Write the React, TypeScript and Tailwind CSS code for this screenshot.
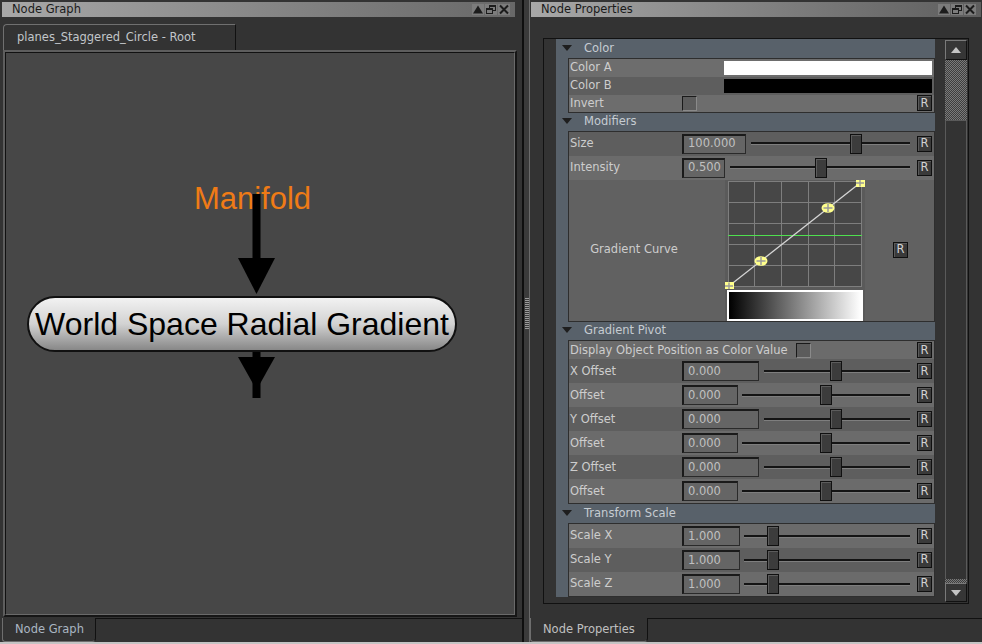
import React from "react";

type SliderRowData = {
  label: string;
  value: string;
  box: string;
  gap: string;
  handle: number;
  dark: boolean;
};

const modifierRows: SliderRowData[] = [
  { label: "Size", value: "100.000", box: "w-[64px]", gap: "ml-[5px]", handle: 99, dark: true },
  { label: "Intensity", value: "0.500", box: "w-[43px]", gap: "ml-[5px]", handle: 85, dark: false },
];

const pivotRows: SliderRowData[] = [
  { label: "X Offset", value: "0.000", box: "w-[77px]", gap: "ml-[5px]", handle: 66, dark: true },
  { label: "Offset", value: "0.000", box: "w-[56px]", gap: "ml-[4px]", handle: 78, dark: false },
  { label: "Y Offset", value: "0.000", box: "w-[77px]", gap: "ml-[5px]", handle: 66, dark: true },
  { label: "Offset", value: "0.000", box: "w-[56px]", gap: "ml-[4px]", handle: 78, dark: false },
  { label: "Z Offset", value: "0.000", box: "w-[77px]", gap: "ml-[5px]", handle: 66, dark: true },
  { label: "Offset", value: "0.000", box: "w-[56px]", gap: "ml-[4px]", handle: 78, dark: false },
];

const scaleRows: SliderRowData[] = [
  { label: "Scale X", value: "1.000", box: "w-[58px]", gap: "ml-[4px]", handle: 23, dark: false },
  { label: "Scale Y", value: "1.000", box: "w-[58px]", gap: "ml-[4px]", handle: 23, dark: true },
  { label: "Scale Z", value: "1.000", box: "w-[58px]", gap: "ml-[4px]", handle: 23, dark: false },
];

function WinIcons() {
  return (
    <div className="flex items-center gap-[1px]">
      <svg width="12" height="11" viewBox="0 0 12 11">
        <rect width="12" height="11" fill="#7c7c7c" />
        <path d="M6 1.5 L11 9.5 L1 9.5 Z" fill="#1c1c1c" />
      </svg>
      <svg width="12" height="11" viewBox="0 0 12 11">
        <rect width="12" height="11" fill="#7c7c7c" />
        <rect x="4.5" y="1.5" width="6" height="5" fill="none" stroke="#1c1c1c" strokeWidth="1" />
        <rect x="4.5" y="1" width="6" height="2" fill="#1c1c1c" />
        <rect x="1.5" y="4.5" width="6" height="5" fill="#7c7c7c" stroke="#1c1c1c" strokeWidth="1" />
        <rect x="1.5" y="4" width="6" height="2" fill="#1c1c1c" />
      </svg>
      <svg width="12" height="11" viewBox="0 0 12 11">
        <rect width="12" height="11" fill="#7c7c7c" />
        <path d="M2 1.5 L10 9.5 M10 1.5 L2 9.5" stroke="#1c1c1c" strokeWidth="2" />
      </svg>
    </div>
  );
}

function TitleBar({ title, className }: { title: string; className: string }) {
  return (
    <div className={`h-[15px] flex items-center justify-between pl-[10px] pr-[5px] ${className}`}>
      <span className="leading-none text-[#1a1a1a]">{title}</span>
      <WinIcons />
    </div>
  );
}

function RButton() {
  return (
    <div className="w-[15px] h-[16px] bg-[#3a3a3a] border border-[#0f0f0f] shadow-[inset_1px_1px_0_#5a5a5a] text-[#d2d2d2] text-[11.5px] leading-none flex items-center justify-center">
      R
    </div>
  );
}

function CheckBox() {
  return (
    <div className="w-[15px] h-[15px] bg-[#5c5c5c] border border-[#1a1a1a] border-b-[#8a8a8a] border-r-[#8a8a8a]" />
  );
}

function SectionHeader({ title, h }: { title: string; h: string }) {
  return (
    <div className={`${h} flex items-center pl-[6px] text-[#c6ccd2]`}>
      <svg width="10" height="7" viewBox="0 0 10 7">
        <path d="M0 0 L10 0 L5 6 Z" fill="#1e1e1e" />
      </svg>
      <span className="ml-[12px] leading-none">{title}</span>
    </div>
  );
}

function SliderRow({ row }: { row: SliderRowData }) {
  return (
    <div className={`h-[24px] flex items-center ${row.dark ? "bg-[#5e5e5e]" : "bg-[#6b6b6b]"}`}>
      <div className="w-[113px] pl-[1px] text-[#cdcdcd] leading-none">{row.label}</div>
      <div
        className={`${row.box} h-[20px] bg-[#656565] border-t-2 border-l-2 border-[#1a1a1a] border-b border-r border-b-[#2a2a2a] border-r-[#2a2a2a] pl-[4px] flex items-center text-[#c0c0c0] leading-none`}
      >
        {row.value}
      </div>
      <div className={`relative flex-1 h-[20px] flex items-center ${row.gap}`}>
        <div className="w-full h-[3px] border-t-2 border-[#141414] border-b border-b-[#7e7e7e]" />
        <div
          className="absolute top-0 w-[12px] h-[20px] bg-[#3c3c3c] border border-[#101010] shadow-[inset_1px_1px_0_#5c5c5c]"
          style={{ left: row.handle }}
        />
      </div>
      <div className="ml-[7px] mr-[2px]">
        <RButton />
      </div>
    </div>
  );
}

function CurveEditor() {
  const vx = [3.5, 29.5, 56.5, 83.5, 109.5, 136.5];
  const hy = [1.5, 22.5, 43.5, 64.5, 85.5, 106.5];
  const pts = [
    [36, 81],
    [103, 28],
  ];
  return (
    <svg width="140" height="141" viewBox="0 0 140 141">
      <defs>
        <linearGradient id="ramp" x1="0" x2="1" y1="0" y2="0">
          <stop offset="0" stopColor="#000" />
          <stop offset="1" stopColor="#fff" />
        </linearGradient>
        <clipPath id="gridclip">
          <rect x="0" y="0" width="140" height="109" />
        </clipPath>
      </defs>
      <rect width="140" height="141" fill="#5a5a5a" />
      <rect x="3" y="1" width="134" height="106" fill="#474747" />
      {vx.map((x) => (
        <line key={"v" + x} x1={x} x2={x} y1="1" y2="107" stroke="#7e7e7e" strokeWidth="1" />
      ))}
      {hy.map((y) => (
        <line key={"h" + y} x1="3" x2="137" y1={y} y2={y} stroke="#7e7e7e" strokeWidth="1" />
      ))}
      <line x1="3" x2="137" y1="55.5" y2="55.5" stroke="#4fe04f" strokeWidth="1" />
      <line x1="4" y1="106" x2="135" y2="3" stroke="#d6d6d6" strokeWidth="1.3" />
      <g clipPath="url(#gridclip)">
        <rect x="0" y="102" width="9" height="8" fill="#ffff8c" />
        <path d="M4 102.5 V109 M0 106 H8" stroke="#9a9a9a" strokeWidth="1.4" />
        <rect x="131" y="0" width="9" height="7" fill="#ffff8c" />
        <path d="M135 0 V6.5 M131 3 H139" stroke="#9a9a9a" strokeWidth="1.4" />
      </g>
      {pts.map(([x, y]) => (
        <g key={x}>
          <ellipse cx={x} cy={y} rx="6.5" ry="4.8" fill="#ffff8c" />
          <path d={`M${x - 4.5} ${y} H${x + 4.5} M${x} ${y - 4} V${y + 4}`} stroke="#9a9a9a" strokeWidth="1.5" />
        </g>
      ))}
      <rect x="2" y="110" width="136" height="31" fill="#ffffff" />
      <rect x="4" y="112" width="132" height="27" fill="url(#ramp)" />
    </svg>
  );
}

function NodeGraphCanvas() {
  return (
    <div className="relative flex-1 bg-[#474747] overflow-hidden">
      <div className="absolute left-[146px] top-[130px] w-[201px] text-center text-[31px] leading-none text-[#ef7b16] font-['Liberation_Sans',sans-serif]">
        Manifold
      </div>
      <svg className="absolute left-0 top-0" width="508" height="561" viewBox="0 0 508 561">
        <rect x="246.5" y="141" width="8" height="69" fill="#000" />
        <path d="M232 205 L269 205 L250.5 241 Z" fill="#000" />
        <rect x="246.5" y="298" width="8" height="47" fill="#000" />
        <path d="M232 304 L269 304 L250.5 337 Z" fill="#000" />
      </svg>
      <div className="absolute left-[21px] top-[243px] w-[430px] h-[56px] rounded-full border-2 border-[#111] bg-linear-to-b from-[#f2f2f2] via-[#d2d2d2] to-[#888888] flex items-center justify-center text-[32px] leading-none text-black font-['Liberation_Sans',sans-serif]">
        World Space Radial Gradient
      </div>
    </div>
  );
}

function Scrollbar() {
  return (
    <div className="w-[22px] h-[562px] mt-[1px] flex flex-col">
      <div className="h-[20px] bg-[#363636] border border-[#7a7a7a] border-b-[#111] border-r-[#111] flex items-center justify-center">
        <svg width="10" height="6" viewBox="0 0 10 6">
          <path d="M5 0 L10 6 L0 6 Z" fill="#c4c4c4" />
        </svg>
      </div>
      <div className="h-[60px] bg-[image:repeating-conic-gradient(#7a7a7a_0_25%,#3e3e3e_0_50%)] bg-[length:2px_2px]" />
      <div className="flex-1 border-x border-t border-[#5a5a5a] bg-[#333]" />
      <div className="h-[4px] bg-[image:repeating-conic-gradient(#7a7a7a_0_25%,#3e3e3e_0_50%)] bg-[length:2px_2px]" />
      <div className="h-[19px] bg-[#363636] border border-[#7a7a7a] border-b-[#111] border-r-[#111] flex items-center justify-center">
        <svg width="10" height="6" viewBox="0 0 10 6">
          <path d="M0 0 L10 0 L5 6 Z" fill="#c4c4c4" />
        </svg>
      </div>
    </div>
  );
}

function Properties() {
  return (
    <div className="w-[379px] h-[558px] bg-[#58616a] flex flex-col">
      <SectionHeader title="Color" h="h-[19px]" />
      <div className="ml-[12px] border border-[#2e2e2e]">
        <div className="h-[18px] bg-[#6d6d6d] flex items-center">
          <div className="w-[155px] pl-[1px] text-[#cdcdcd] leading-none">Color A</div>
          <div className="flex-1 h-[14px] bg-white mr-[2px]" />
        </div>
        <div className="h-[18px] bg-[#5e5e5e] flex items-center">
          <div className="w-[155px] pl-[1px] text-[#cdcdcd] leading-none">Color B</div>
          <div className="flex-1 h-[14px] bg-black mr-[2px]" />
        </div>
        <div className="h-[17px] bg-[#6d6d6d] flex items-center">
          <div className="w-[113px] pl-[1px] text-[#cdcdcd] leading-none">Invert</div>
          <CheckBox />
          <div className="flex-1" />
          <div className="mr-[2px]">
            <RButton />
          </div>
        </div>
      </div>

      <SectionHeader title="Modifiers" h="h-[18px]" />
      <div className="ml-[12px] border border-[#2e2e2e]">
        {modifierRows.map((r) => (
          <SliderRow key={r.label} row={r} />
        ))}
        <div className="h-[141px] bg-[#616161] flex items-center">
          <div className="w-[130px] text-center text-[#cdcdcd] leading-none">Gradient Curve</div>
          <div className="ml-[26px]">
            <CurveEditor />
          </div>
          <div className="ml-[28px]">
            <RButton />
          </div>
        </div>
      </div>

      <SectionHeader title="Gradient Pivot" h="h-[19px]" />
      <div className="ml-[12px] border border-[#2e2e2e]">
        <div className="h-[18px] bg-[#6b6b6b] flex items-center">
          <div className="w-[227px] pl-[1px] text-[#cdcdcd] leading-none whitespace-nowrap">
            Display Object Position as Color Value
          </div>
          <CheckBox />
          <div className="flex-1" />
          <div className="mr-[2px]">
            <RButton />
          </div>
        </div>
        {pivotRows.map((r, i) => (
          <SliderRow key={i} row={r} />
        ))}
      </div>

      <SectionHeader title="Transform Scale" h="h-[19px]" />
      <div className="ml-[12px] border border-[#2e2e2e]">
        {scaleRows.map((r) => (
          <SliderRow key={r.label} row={r} />
        ))}
      </div>
    </div>
  );
}

export default function App() {
  return (
    <div className="w-[982px] h-[644px] bg-[#333333] flex flex-col overflow-hidden font-['DejaVu_Sans',sans-serif] text-[11.5px]">
      <div className="flex h-[642px]">
        {/* node graph pane */}
        <div className="w-[522px] flex flex-col">
          <div className="h-[2px]" />
          <TitleBar title="Node Graph" className="ml-[2px] w-[513px] bg-linear-to-r from-[#a8a8a8] to-[#686868]" />
          <div className="h-[7px]" />
          <div className="h-[26px] ml-[3px] flex">
            <div className="w-[233px] border-t border-l border-[#707070] border-r border-r-[#111] rounded-tl-[4px] pl-[13px] pt-[1px] flex items-center text-[#c2c6ca] leading-none">
              planes_Staggered_Circle - Root
            </div>
          </div>
          <div className="ml-[3px] w-[514px] h-[567px] border-2 border-[#5e5e5e] border-b-[#161616] border-r-[#161616] flex">
            <div className="flex-1 flex border border-[#111] border-b-[#6a6a6a] border-r-[#6a6a6a]">
              <NodeGraphCanvas />
            </div>
          </div>
          <div className="h-[25px] flex">
            <div className="w-[2px]" />
            <div className="w-[94px] h-[24px] mt-[1px] border-l border-b border-[#6e6e6e] border-r border-r-[#111] rounded-bl-[3px] rounded-br-[4px] pl-[12px] pt-[1px] flex items-center text-[#aab6c2] leading-none">
              Node Graph
            </div>
            <div className="flex-1 mt-[1px] border-t border-[#111]" />
          </div>
        </div>

        {/* splitter */}
        <div className="w-[8px] bg-[#3a3a3a] border-l-2 border-[#0e0e0e] border-r border-r-[#6a6a6a] pt-[298px] flex justify-center">
          <div className="w-[4px] h-[32px] bg-[repeating-linear-gradient(to_bottom,#9a9a9a_0_1px,#3a3a3a_1px_2px)]" />
        </div>

        {/* node properties pane */}
        <div className="flex-1 flex flex-col">
          <div className="h-[2px]" />
          <TitleBar title="Node Properties" className="ml-[1px] w-[450px] bg-linear-to-r from-[#a8a8a8] to-[#5e5e5e]" />
          <div className="h-[21px]" />
          <div className="ml-[13px] w-[426px] h-[566px] border border-[#111] flex pl-[12px]">
            <Properties />
            <div className="w-[10px]" />
            <Scrollbar />
          </div>
          <div className="h-[14px]" />
          <div className="h-[24px] flex">
            <div className="w-[118px] h-[24px] border-l border-b border-[#6e6e6e] border-r border-r-[#111] rounded-bl-[3px] rounded-br-[4px] pl-[12px] pt-[1px] flex items-center text-[#c0c0c0] leading-none">
              Node Properties
            </div>
            <div className="flex-1 border-t border-[#111]" />
          </div>
        </div>
      </div>
      <div className="h-[2px] bg-[#c4c4c4]" />
    </div>
  );
}
